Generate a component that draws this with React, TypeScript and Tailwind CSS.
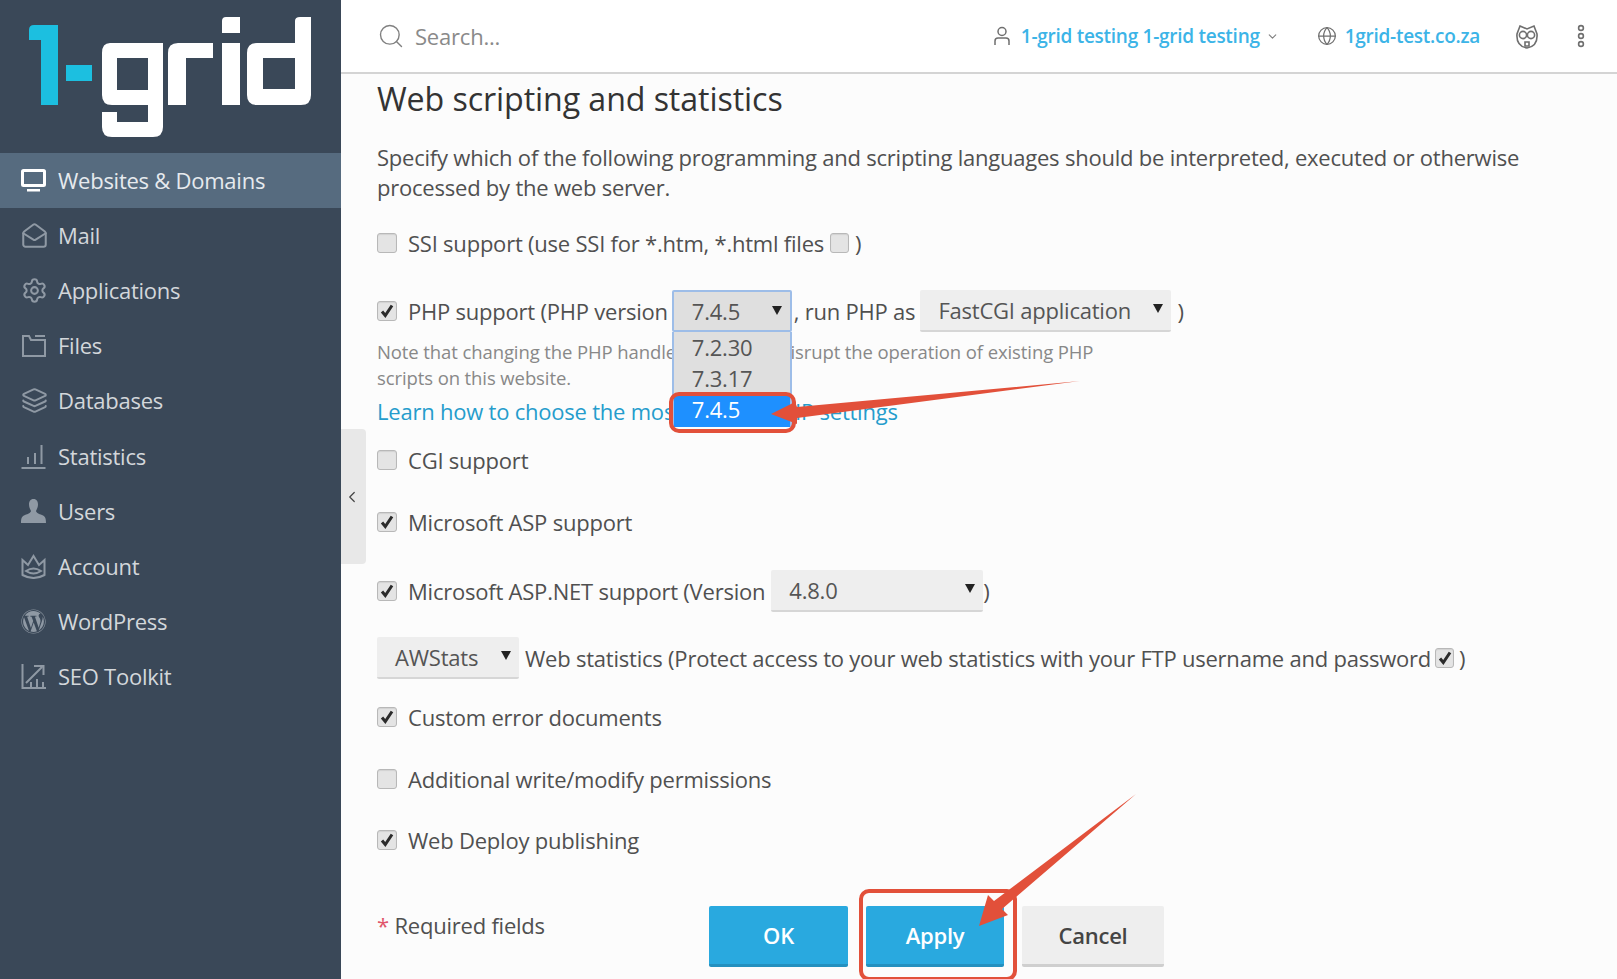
import { ReactNode } from "react";
import { FaWordpress } from "react-icons/fa";
import { ChevronDown, ChevronLeft, Globe, Layers, MailOpen, Search, Settings } from "lucide-react";

const FONT = "font-['Open_Sans','Liberation_Sans',sans-serif]";

function Logo() {
  return (
    <svg width="341" height="153" viewBox="0 0 341 153" className="block">
      <path fill="#1cbfe0" d="M34 25H58V105H41V40H29V30Q29 25 34 25ZM66 65H92V81H66Z" />
      <path
        fill="#ffffff"
        fillRule="evenodd"
        d="M110 43H163V127Q163 137 153 137H112Q102 137 102 127V112H117V122H148V105H112Q102 105 102 95V53Q102 43 110 43ZM117 58V90H148V58Z"
      />
      <path fill="#ffffff" d="M178 43H213V58H186V105H168V53Q168 43 178 43Z" />
      <path fill="#ffffff" d="M226 17H240V33H222V21Q222 17 226 17ZM222 43H240V105H222Z" />
      <path
        fill="#ffffff"
        fillRule="evenodd"
        d="M300 17H311V95Q311 105 301 105H257Q247 105 247 95V53Q247 43 257 43H295V21Q295 17 300 17ZM263 58V89H295V58Z"
      />
    </svg>
  );
}

function MonitorIcon() {
  return (
    <svg width="25" height="25" viewBox="0 0 25 25" fill="none">
      <rect x="1.5" y="2.5" width="22" height="15" rx="1" stroke="#fff" strokeWidth="3" />
      <rect x="6" y="21" width="13" height="2.5" fill="#fff" />
    </svg>
  );
}

function FilesIcon() {
  return (
    <svg width="25" height="25" viewBox="0 0 25 25" fill="none" stroke="currentColor" strokeWidth="2">
      <path d="M2 3V23H24V7H10L8 3Z" />
      <path d="M14 3H24" />
    </svg>
  );
}

function StatsIcon() {
  return (
    <svg width="25" height="25" viewBox="0 0 25 25" fill="none" stroke="currentColor" strokeWidth="2">
      <path d="M0.5 24H24.5M7 20V13M14 20V9M20.5 20V1" />
    </svg>
  );
}

function UserIcon() {
  return (
    <svg width="25" height="25" viewBox="0 0 25 25" fill="currentColor">
      <path d="M12.5 0C15.8 0 17 2.5 17 5.5C17 8.5 15.5 10.5 15 12C15 13.5 18 15 21 16C24 17 25 19 25 24H0C0 19 1 17 4 16C7 15 10 13.5 10 12C9.5 10.5 8 8.5 8 5.5C8 2.5 9.2 0 12.5 0Z" />
    </svg>
  );
}

function CrownIcon() {
  return (
    <svg width="25" height="25" viewBox="0 0 25 25" fill="none" stroke="currentColor" strokeWidth="2">
      <path d="M1.5 6L7 11L12.5 2L18 11L23.5 6V21Q12.5 27 1.5 21Z" />
      <path d="M5 17Q12.5 12 20 17Q12.5 22 5 17Z" />
    </svg>
  );
}

function SeoIcon() {
  return (
    <svg width="25" height="25" viewBox="0 0 25 25" fill="none" stroke="currentColor" strokeWidth="2">
      <path d="M1.5 0V24H25M5 19L21 3M13 2H22.5V11M10 23V18M16 23V15M22 23V18" />
    </svg>
  );
}

const NAV: { label: string; icon: ReactNode; active?: boolean }[] = [
  { label: "Websites & Domains", icon: <MonitorIcon />, active: true },
  { label: "Mail", icon: <MailOpen size={27} strokeWidth={1.8} /> },
  { label: "Applications", icon: <Settings size={27} strokeWidth={1.8} /> },
  { label: "Files", icon: <FilesIcon /> },
  { label: "Databases", icon: <Layers size={27} strokeWidth={1.8} /> },
  { label: "Statistics", icon: <StatsIcon /> },
  { label: "Users", icon: <UserIcon /> },
  { label: "Account", icon: <CrownIcon /> },
  { label: "WordPress", icon: <FaWordpress size={25} /> },
  { label: "SEO Toolkit", icon: <SeoIcon /> },
];

function Sidebar() {
  return (
    <aside className="w-[341px] shrink-0 bg-[#3a4858]">
      <Logo />
      <nav>
        {NAV.map((item) => (
          <div
            key={item.label}
            className={`flex h-[55.2px] items-center pb-[1px] pl-[21px] ${item.active ? "bg-[#566b7f]" : ""}`}
          >
            <span className={`flex w-[37px] shrink-0 ${item.active ? "text-white" : "text-[#8f99a4]"}`}>{item.icon}</span>
            <span className={`text-[22px] tracking-[-0.25px] ${item.active ? "text-[#e6eaee]" : "text-[#d3d7db]"}`}>{item.label}</span>
          </div>
        ))}
      </nav>
    </aside>
  );
}

function Check({ on, small }: { on?: boolean; small?: boolean }) {
  return (
    <span
      className={`flex h-[20px] shrink-0 items-center justify-center rounded-[3px] border border-[#b8b8b8] bg-[#e4e4e4] shadow-[inset_0_1px_1px_rgba(0,0,0,0.08)] ${small ? "w-[19px]" : "w-[20px]"}`}
    >
      {on && (
        <svg width="14" height="14" viewBox="0 0 14 14">
          <path d="M2 7.5L5.3 11.5L12 1.5" fill="none" stroke="#2b2b2b" strokeWidth="3" />
        </svg>
      )}
    </span>
  );
}

function Select({ value, w, focused, children }: { value: string; w: string; focused?: boolean; children?: ReactNode }) {
  return (
    <span
      className={`relative flex h-[42px] shrink-0 items-center rounded-[2px] pl-[18px] pt-[1px] text-[#555] ${w} ${focused ? "border-2 border-[#9dbde8] bg-[#dfdfdf]" : "border-b-2 border-[#d6d6d6] bg-[#eeeeee]"}`}
    >
      {value}
      <span className="absolute right-[8px] top-[14px] h-0 w-0 border-x-[5px] border-t-[9px] border-x-transparent border-t-[#222]" />
      {children}
    </span>
  );
}

function Option({ label, checked }: { label: string; checked?: boolean }) {
  return (
    <div className="flex h-[30px] items-center gap-[11px]">
      <Check on={checked} />
      <span>{label}</span>
    </div>
  );
}

function Topbar() {
  return (
    <header className="flex h-[74px] shrink-0 items-center border-b-2 border-[#d4d4d4] bg-white pl-[36px] pr-[32px]">
      <Search size={28} strokeWidth={1.2} className="text-[#808080]" />
      <span className="ml-[10px] text-[22px] tracking-[-0.2px] text-[#8a8a8a]">Search...</span>
      <div className="ml-auto flex items-center text-[19px] font-semibold tracking-[-0.27px] text-[#3cb4e7]">
        <svg width="18" height="20" viewBox="0 0 18 20" fill="none" stroke="#6f6f6f" strokeWidth="1.5" className="mr-[10px]">
          <circle cx="9" cy="5.5" r="4" />
          <path d="M2 19V15Q2 12 5 12H13Q16 12 16 15V19" />
        </svg>
        <span>1-grid testing 1-grid testing</span>
        <ChevronDown size={13} className="ml-[6px] text-[#808080]" />
        <Globe size={20} strokeWidth={1.5} className="ml-[38px] mr-[8px] text-[#6f6f6f]" />
        <span>1grid-test.co.za</span>
        <svg width="24" height="28" viewBox="0 0 24 28" fill="none" stroke="#6f6f6f" strokeWidth="1.6" className="ml-[35px]">
          <path d="M5 4L12 7L19 4L22 12Q23 24 12 26Q1 24 2 12Z" />
          <circle cx="8" cy="13" r="3.6" />
          <circle cx="16" cy="13" r="3.6" />
          <path d="M10 20H14V24H10Z" />
        </svg>
        <svg width="8" height="24" viewBox="0 0 8 24" fill="none" stroke="#6f6f6f" strokeWidth="1.6" className="ml-[38px]">
          <circle cx="4" cy="4" r="2.4" />
          <circle cx="4" cy="12" r="2.4" />
          <circle cx="4" cy="20" r="2.4" />
        </svg>
      </div>
    </header>
  );
}

function Form() {
  return (
    <div className="pl-[36px] pr-[36px] pt-[5px] text-[22px] tracking-[-0.22px] text-[#505050]">
      <h1 className="h-[40px] text-[32.2px] font-medium leading-[40px] tracking-[-0.1px] text-[#333]">Web scripting and statistics</h1>
      <p className="mt-[23px] leading-[30px]">
        Specify which of the following programming and scripting languages should be interpreted, executed or otherwise processed by the web server.
      </p>

      <div className="mt-[26px] flex h-[30px] items-center gap-[11px]">
        <Check />
        <span>SSI support (use SSI for *.htm, *.html files</span>
        <span className="-ml-[5px]"><Check small /></span>
        <span className="-ml-[5px]">)</span>
      </div>

      <div className="mt-[32px] flex h-[42px] items-center">
        <Check on />
        <span className="ml-[11px]">PHP support (PHP version</span>
        <span className="ml-[4px]">
          <Select value="7.4.5" w="w-[120px]" focused>
            <div className="absolute -left-[2px] top-[40px] w-[120px] border-x-2 border-[#9dbde8] bg-[#dfdfdf] text-[22px] leading-[31px] text-[#555]">
              <div className="pl-[18px]">7.2.30</div>
              <div className="pl-[18px]">7.3.17</div>
              <div className="h-[33px] bg-[#1e90ff] pl-[18px] text-white">7.4.5</div>
            </div>
          </Select>
        </span>
        <span className="ml-[2px]">, run PHP as</span>
        <span className="ml-[5px]"><Select value="FastCGI application" w="w-[251px]" /></span>
        <span className="ml-[6px]">)</span>
      </div>

      <p className="mt-[7px] w-[720px] text-[18.5px] leading-[26px] tracking-[-0.1px] text-[#888]">
        Note that changing the PHP handler may often disrupt the operation of existing PHP scripts on this website.
      </p>
      <p className="mt-[5px] leading-[30px] text-[#259ccc]">Learn how to choose the most suitable PHP settings</p>

      <div className="mt-[19px]"><Option label="CGI support" /></div>
      <div className="mt-[32px]"><Option label="Microsoft ASP support" checked /></div>

      <div className="mt-[33px] flex h-[42px] items-center">
        <Check on />
        <span className="ml-[11px]">Microsoft ASP.NET support (Version</span>
        <span className="ml-[6px]"><Select value="4.8.0" w="w-[212px]" /></span>
        <span>)</span>
      </div>

      <div className="mt-[25px] flex h-[42px] items-center">
        <Select value="AWStats" w="w-[142px]" />
        <span className="ml-[6px]">Web statistics (Protect access to your web statistics with your FTP username and password</span>
        <span className="ml-[4px]"><Check on small /></span>
        <span className="ml-[5px]">)</span>
      </div>

      <div className="mt-[23px]"><Option label="Custom error documents" checked /></div>
      <div className="mt-[32px]"><Option label="Additional write/modify permissions" /></div>
      <div className="mt-[31px]"><Option label="Web Deploy publishing" checked /></div>

      <div className="mt-[51px] flex items-start">
        <span className="mt-[4px] w-[332px] leading-[30px]">
          <span className="text-[#e0556b]">*</span> Required fields
        </span>
        <button className="h-[61px] w-[139px] rounded-[2px] border-b-[3px] border-[#2490bf] bg-[#29a9df] font-semibold text-white">OK</button>
        <button className="ml-[18px] h-[61px] w-[138px] rounded-[2px] border-b-[3px] border-[#2490bf] bg-[#29a9df] font-semibold text-white">Apply</button>
        <button className="ml-[18px] h-[61px] w-[142px] rounded-[2px] border-b-[3px] border-[#cfcfcf] bg-[#eeeeee] font-semibold text-[#444]">Cancel</button>
      </div>
    </div>
  );
}

// red markup drawn over the screenshot
function Annotations() {
  return (
    <div className="pointer-events-none absolute inset-0">
      <div className="absolute left-[669px] top-[392px] h-[41px] w-[127px] rounded-[10px] border-[4px] border-[#e2503a]" />
      <div className="absolute left-[859px] top-[889px] h-[92px] w-[158px] rounded-[10px] border-[4px] border-[#e2503a]" />
      <svg width="1617" height="979" viewBox="0 0 1617 979" className="absolute left-0 top-0">
        <path fill="#e2503a" d="M1080 381L797 407L795 402L771 414L797 424L797 418Z" />
        <path fill="#e2503a" d="M1136 794L994 901L988 895L979 926L1008 915L1002 909Z" />
      </svg>
    </div>
  );
}

export default function App() {
  return (
    <div className={`relative flex h-[979px] w-full overflow-hidden bg-[#fcfcfc] ${FONT}`}>
      <Sidebar />
      <main className="relative min-w-0 flex-1">
        <Topbar />
        <Form />
        <div className="absolute left-0 top-[429px] flex h-[135px] w-[25px] items-center justify-center rounded-r-[4px] bg-[#e8e8e8] pr-[4px] text-[#444]">
          <ChevronLeft size={18} strokeWidth={1.6} />
        </div>
      </main>
      <Annotations />
    </div>
  );
}
